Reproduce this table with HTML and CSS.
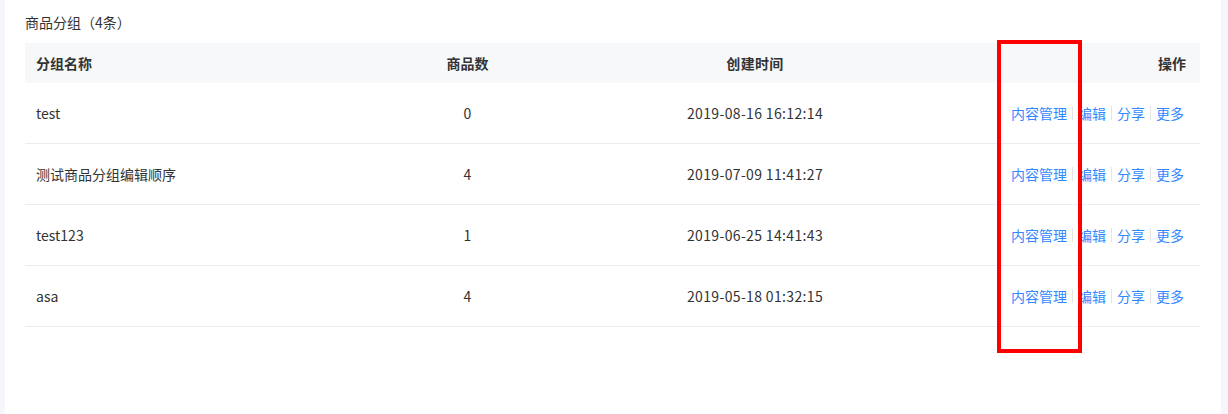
FILE: index.html
```html
<!DOCTYPE html>
<html lang="zh-CN">
<head>
<meta charset="utf-8">
<title>商品分组</title>
<link rel="stylesheet" href="styles.css">
</head>
<body>
<div class="page">
  <div class="panel">
    <div class="title">商品分组（4条）</div>
    <div class="table-wrap">
      <div class="row head">
        <div class="cell c-name">分组名称</div>
        <div class="cell c-num">商品数</div>
        <div class="cell c-time">创建时间</div>
        <div class="cell c-ops">操作</div>
      </div>
      <div class="row">
        <div class="cell c-name">test</div>
        <div class="cell c-num">0</div>
        <div class="cell c-time">2019-08-16 16:12:14</div>
        <div class="cell c-ops"><a>内容管理</a><i class="sep"></i><a>编辑</a><i class="sep"></i><a>分享</a><i class="sep"></i><a>更多</a></div>
      </div>
      <div class="row">
        <div class="cell c-name">测试商品分组编辑顺序</div>
        <div class="cell c-num">4</div>
        <div class="cell c-time">2019-07-09 11:41:27</div>
        <div class="cell c-ops"><a>内容管理</a><i class="sep"></i><a>编辑</a><i class="sep"></i><a>分享</a><i class="sep"></i><a>更多</a></div>
      </div>
      <div class="row">
        <div class="cell c-name">test123</div>
        <div class="cell c-num">1</div>
        <div class="cell c-time">2019-06-25 14:41:43</div>
        <div class="cell c-ops"><a>内容管理</a><i class="sep"></i><a>编辑</a><i class="sep"></i><a>分享</a><i class="sep"></i><a>更多</a></div>
      </div>
      <div class="row">
        <div class="cell c-name">asa</div>
        <div class="cell c-num">4</div>
        <div class="cell c-time">2019-05-18 01:32:15</div>
        <div class="cell c-ops"><a>内容管理</a><i class="sep"></i><a>编辑</a><i class="sep"></i><a>分享</a><i class="sep"></i><a>更多</a></div>
      </div>
      <div class="highlight"></div>
    </div>
  </div>
</div>
</body>
</html>
```
FILE: styles.css
```css
html, body {
  margin: 0;
  padding: 0;
  background: #f5f6fa;
}
body {
  font-family: "Noto Sans CJK SC", "Noto Sans", sans-serif;
  color: #333;
  font-size: 14px;
}
.page {
  display: flex;
  height: 414px;
  padding: 0 7px 0 5px;
}
.panel {
  flex: 1;
  background: #fff;
  padding: 12px 21px 0 20px;
}
.title {
  font-size: 14px;
  line-height: 20px;
  color: #333;
  margin-bottom: 11px;
}
.table-wrap {
  position: relative;
}
.row {
  display: grid;
  grid-template-columns: 350px 185px 390px 1fr;
  align-items: center;
  height: 60px;
  border-bottom: 1px solid #ebedf0;
}
.row.head {
  height: 40px;
  background: #f7f8fa;
  border-bottom: none;
  font-weight: bold;
}
.cell {
  line-height: 20px;
  white-space: nowrap;
}
.c-name {
  padding-left: 11px;
}
.c-num, .c-time {
  text-align: center;
}
.c-time {
  letter-spacing: 0.35px;
}
.c-ops {
  display: flex;
  justify-content: flex-end;
  align-items: center;
  padding-right: 16px;
}
.head .c-ops {
  padding-right: 14px;
}
.c-ops a {
  color: #38f;
  cursor: pointer;
}
.sep {
  display: inline-block;
  width: 1px;
  height: 14px;
  background: #e5e5e5;
  margin: 0 5px;
}
.highlight {
  position: absolute;
  left: 972px;
  top: -3px;
  width: 77px;
  height: 305px;
  border: 4px solid #f00;
}
```
